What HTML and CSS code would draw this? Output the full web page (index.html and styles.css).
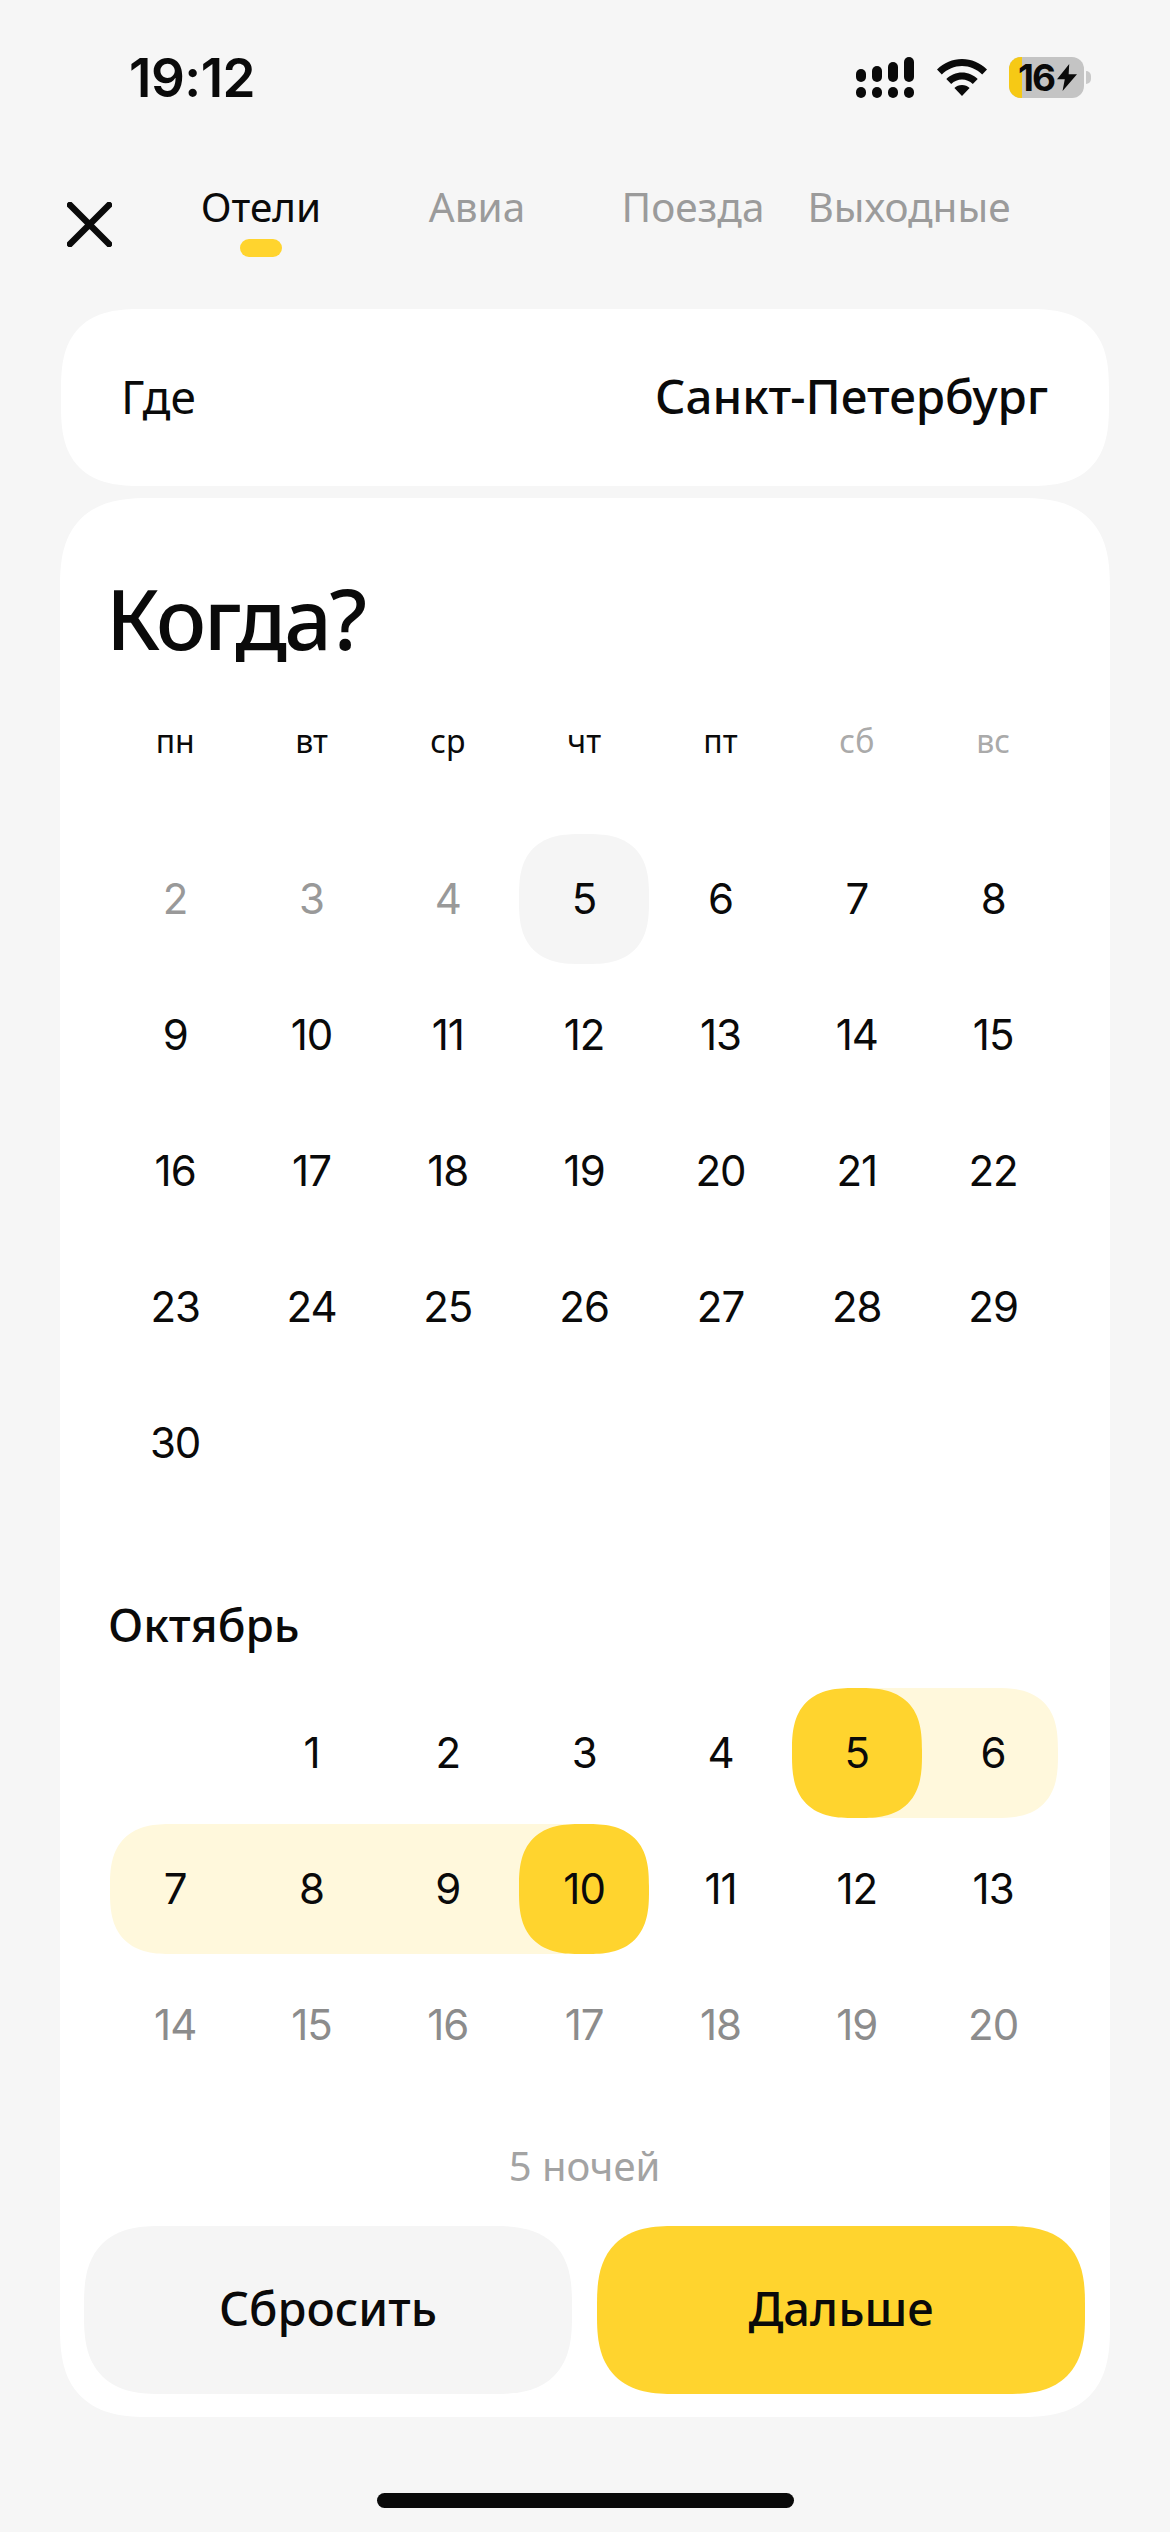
FILE: index.html
```html
<!DOCTYPE html>
<html lang="ru">
<head>
<meta charset="utf-8">
<title>Когда?</title>
<link rel="stylesheet" href="styles.css">
</head>
<body>
<div class="page">
  <header class="status">
    <span class="time">19:12</span>
    <div class="status-icons">
      <svg class="signal" width="58" height="41" viewBox="0 0 58 41"><g fill="#0a0a0a"><rect x="0" y="12" width="10" height="13" rx="5"/><rect x="16" y="9" width="10" height="16" rx="5"/><rect x="32" y="5" width="10" height="20" rx="5"/><rect x="48" y="0" width="10" height="25" rx="5"/><rect x="0" y="30" width="10" height="11" rx="5"/><rect x="16" y="30" width="10" height="11" rx="5"/><rect x="32" y="30" width="10" height="11" rx="5"/><rect x="48" y="30" width="10" height="11" rx="5"/></g></svg>
      <svg class="wifi" width="50" height="37" viewBox="0 0 50 37"><path d="M25 0C15.500 0 7 3.700 0 10.500L4.800 15.500C10.500 10 17.400 7 25 7s14.500 3 20.200 8.500L50 10.500C43 3.700 34.500 0 25 0z" fill="#0a0a0a"/><path d="M25 13.500c-6 0-11.500 2.400-15.700 6.500l4.900 5c3-2.900 6.800-4.500 10.800-4.500s7.800 1.600 10.800 4.500l4.900-5c-4.200-4.100-9.700-6.500-15.700-6.500z" fill="#0a0a0a"/><path d="M25 26c-3 0-5.600 1.100-7.600 3L25 37l7.600-8c-2-1.900-4.600-3-7.600-3z" fill="#0a0a0a"/></svg>
      <div class="battery">
        <span class="battery-level"></span>
        <span class="battery-text">16</span>
        <svg class="bolt" width="20" height="27" viewBox="0 0 18 29" preserveAspectRatio="none"><path d="M11 0L0 16.500h7L5 29l13-18h-7.500z" fill="#0a0a0a"/></svg>
        <span class="battery-nub"></span>
      </div>
    </div>
  </header>

  <nav class="topbar">
    <button class="close" aria-label="Закрыть">
      <svg width="45" height="45" viewBox="0 0 45 45"><path d="M3 3l39 39M42 3L3 42" stroke="#0a0a0a" stroke-width="6.500" stroke-linecap="round" fill="none"/></svg>
    </button>
    <div class="tabs">
      <div class="tab active">Отели<span class="tab-mark"></span></div>
      <div class="tab">Авиа</div>
      <div class="tab">Поезда</div>
      <div class="tab">Выходные</div>
    </div>
  </nav>

  <section class="where">
    <span class="where-label">Где</span>
    <span class="where-value">Санкт-Петербург</span>
  </section>

  <main class="when">
    <h1 class="title">Когда?</h1>
    <div class="weekdays">
      <span>пн</span><span>вт</span><span>ср</span><span>чт</span><span>пт</span><span class="off">сб</span><span class="off">вс</span>
    </div>
    <div class="days">
      <div class="cell"><span class="day past">2</span></div>
      <div class="cell"><span class="day past">3</span></div>
      <div class="cell"><span class="day past">4</span></div>
      <div class="cell"><span class="day today">5</span></div>
      <div class="cell"><span class="day">6</span></div>
      <div class="cell"><span class="day">7</span></div>
      <div class="cell"><span class="day">8</span></div>
      <div class="cell"><span class="day">9</span></div>
      <div class="cell"><span class="day">10</span></div>
      <div class="cell"><span class="day">11</span></div>
      <div class="cell"><span class="day">12</span></div>
      <div class="cell"><span class="day">13</span></div>
      <div class="cell"><span class="day">14</span></div>
      <div class="cell"><span class="day">15</span></div>
      <div class="cell"><span class="day">16</span></div>
      <div class="cell"><span class="day">17</span></div>
      <div class="cell"><span class="day">18</span></div>
      <div class="cell"><span class="day">19</span></div>
      <div class="cell"><span class="day">20</span></div>
      <div class="cell"><span class="day">21</span></div>
      <div class="cell"><span class="day">22</span></div>
      <div class="cell"><span class="day">23</span></div>
      <div class="cell"><span class="day">24</span></div>
      <div class="cell"><span class="day">25</span></div>
      <div class="cell"><span class="day">26</span></div>
      <div class="cell"><span class="day">27</span></div>
      <div class="cell"><span class="day">28</span></div>
      <div class="cell"><span class="day">29</span></div>
      <div class="cell"><span class="day">30</span></div>
    </div>
    <h2 class="month">Октябрь</h2>
    <div class="days october">
      <div class="cell"></div>
      <div class="cell"><span class="day">1</span></div>
      <div class="cell"><span class="day">2</span></div>
      <div class="cell"><span class="day">3</span></div>
      <div class="cell"><span class="day">4</span></div>
      <div class="cell"><span class="day picked">5</span></div>
      <div class="cell range range-end-right"><span class="day">6</span></div>
      <div class="cell range range-end-left"><span class="day">7</span></div>
      <div class="cell range"><span class="day">8</span></div>
      <div class="cell range"><span class="day">9</span></div>
      <div class="cell"><span class="day picked">10</span></div>
      <div class="cell"><span class="day">11</span></div>
      <div class="cell"><span class="day">12</span></div>
      <div class="cell"><span class="day">13</span></div>
      <div class="cell"><span class="day dim">14</span></div>
      <div class="cell"><span class="day dim">15</span></div>
      <div class="cell"><span class="day dim">16</span></div>
      <div class="cell"><span class="day dim">17</span></div>
      <div class="cell"><span class="day dim">18</span></div>
      <div class="cell"><span class="day dim">19</span></div>
      <div class="cell"><span class="day dim">20</span></div>
    </div>
    <p class="nights">5 ночей</p>
    <div class="actions">
      <button class="btn btn-reset">Сбросить</button>
      <button class="btn btn-next">Дальше</button>
    </div>
  </main>

  <div class="home-bar"></div>
</div>
</body>
</html>
```
FILE: styles.css
```css
* { box-sizing: border-box; }
html, body { margin: 0; padding: 0; }
body { background: #f6f6f6; color: #0a0a0a; font-family: "Noto Sans", Inter, sans-serif; }
.page { width: 1170px; height: 2532px; display: flex; flex-direction: column; align-items: flex-start; overflow: hidden; }

.status { width: 100%; height: 150px; display: flex; justify-content: space-between; padding: 57px 86px 0 129px; }
.time { font: 600 53px/42px "Inter", sans-serif; letter-spacing: -0.5px; }
.status-icons { display: flex; align-items: flex-start; height: 41px; }
.signal { margin-right: 23px; }
.wifi { margin: 2px 22px 0 0; }
.battery { position: relative; width: 75px; height: 41px; background: #c4c4c4; border-radius: 12px; display: flex; align-items: center; overflow: visible; }
.battery-level { position: absolute; left: 0; top: 0; bottom: 0; width: 13px; background: #f6c915; border-radius: 12px 0 0 12px; }
.battery-text { position: relative; margin-left: 9px; font: 700 37px/41px Inter, sans-serif; letter-spacing: -2px; }
.bolt { position: relative; margin-left: 3px; }
.battery-nub { position: absolute; right: -7px; top: 14px; width: 5px; height: 13px; background: #c9c9c9; border-radius: 0 5px 5px 0; }

.topbar { width: 100%; height: 159px; display: flex; padding: 27px 0 0 67px; }
.close { width: 45px; height: 45px; padding: 0; border: 0; background: none; margin-top: 25px; }
.close svg { display: block; }
.tabs { display: grid; grid-template-columns: repeat(4, 216px); margin-left: 41px; height: 82px; }
.tab { font-size: 40.500px; line-height: 60px; color: #9b9b9b; text-align: center; display: flex; flex-direction: column; align-items: center; white-space: nowrap; }
.tab.active { color: #0a0a0a; }
.tab-mark { width: 42px; height: 18px; border-radius: 9px; background: #ffd42e; margin-top: 2px; }

.where { width: 1048px; height: 177px; margin-left: 61px; background: #fff; border-radius: 80px; corner-shape: superellipse(1.4); display: flex; justify-content: space-between; align-items: center; padding: 0 61px 4px 60px; font-size: 46px; }
.where-value { font-weight: 500; font-size: 47.500px; }

.when { width: 1050px; height: 1919px; margin: 12px 0 0 60px; background: #fff; border-radius: 90px; corner-shape: superellipse(1.4); padding: 70px 25px 23px 24px; }
.title { margin: 0 0 0 22px; font-size: 84px; line-height: 100px; font-weight: 500; letter-spacing: -2.700px; }
.weekdays { display: grid; grid-template-columns: repeat(7, 136.330px); margin: 53px 0 0 23px; text-align: center; font-size: 32px; line-height: 40px; }
.weekdays .off { color: #aaa; }

.days { display: grid; grid-template-columns: repeat(7, 136.330px); grid-auto-rows: 136px; margin: 70px 0 0 23px; }
.october { margin-top: 36px; }
.cell { position: relative; display: flex; align-items: center; justify-content: center; }
.day { position: relative; width: 130px; height: 130px; border-radius: 62px; corner-shape: superellipse(1.4); display: flex; align-items: center; justify-content: center; font: 400 42px/1 Inter, sans-serif; letter-spacing: -1px; }
.past { color: #999; }
.dim { color: #8c8c8c; }
.today { background: #f5f5f5; }
.picked { background: #ffd42e; }

.range::before { content: ""; position: absolute; top: 3px; bottom: 3px; left: 0; right: 0; background: #fff8dc; }
.range-end-right::before { left: -70px; right: 3px; border-radius: 0 62px 62px 0; corner-shape: superellipse(1.4); }
.range-end-left::before { left: 3px; border-radius: 62px 0 0 62px; corner-shape: superellipse(1.4); }
.range:nth-child(10)::before { right: -70px; }
.cell:has(.picked) .day { z-index: 1; }

.month { margin: 88px 0 0 24px; font-size: 46px; line-height: 50px; font-weight: 500; }
.nights { margin: 48px 0 0; text-align: center; font-size: 40px; line-height: 50px; color: #a3a3a3; }

.actions { display: flex; gap: 25px; margin-top: 35px; }
.btn { width: 488px; height: 168px; border: 0; padding: 0 0 3px; border-radius: 78px; corner-shape: superellipse(1.4); font: 500 47px/1 "Noto Sans", sans-serif; color: #0a0a0a; }
.btn-reset { background: #f5f5f5; }
.btn-next { background: #ffd42e; }

.home-bar { width: 417px; height: 15px; margin: 76px 0 0 377px; background: #0a0a0a; border-radius: 8px; }
```
